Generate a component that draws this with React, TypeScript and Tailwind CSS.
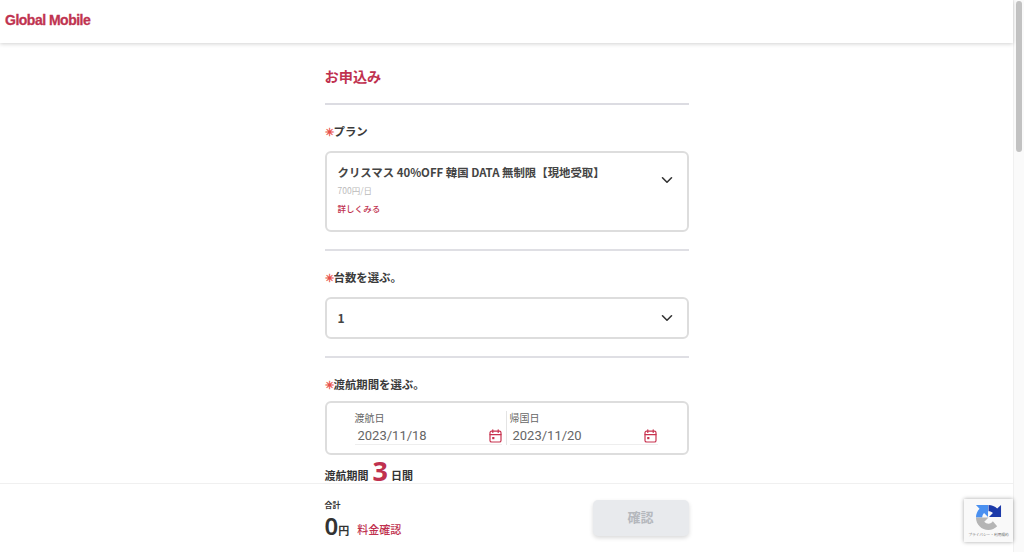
import React from "react";

const font = { fontFamily: '"Noto Sans CJK JP", "Noto Sans", sans-serif' };

function Chevron({ className = "" }: { className?: string }) {
  return (
    <svg width="14" height="14" viewBox="0 0 14 14" fill="none" stroke="#333" strokeWidth="1.6" strokeLinecap="round" strokeLinejoin="round" className={"shrink-0 " + className}>
      <path d="M2.5 4.8 7 9.2l4.5-4.4" />
    </svg>
  );
}

function Calendar() {
  return (
    <svg width="13" height="14" viewBox="0 0 13 14" fill="none" stroke="#c8324f" strokeWidth="1.2" className="shrink-0">
      <rect x="1" y="2.2" width="11" height="10.8" rx="1.6" />
      <path d="M1 5.6h11M3.8.8v2.6M9.2.8v2.6" strokeLinecap="round" />
      <rect x="3.2" y="8" width="2.2" height="2.2" fill="#c8324f" stroke="none" />
    </svg>
  );
}

function Label({ children }: { children: React.ReactNode }) {
  return (
    <div className="flex items-center h-[18px] text-[11.4px] leading-[18px] font-bold text-[#3a3a3a]">
      <span className="text-[#e8504a] text-[11px] w-[9px] font-bold">✳</span>
      {children}
    </div>
  );
}

function Recaptcha() {
  return (
    <div className="absolute right-[11px] top-[499px] w-[49px] h-[43px] bg-[#f9f9f9] shadow-[0_0_4px_rgba(0,0,0,0.35)] flex flex-col items-center pt-[5px]">
      <svg width="27" height="27" viewBox="0 0 28 28">
        <path d="M1 14C1 10.500 2.400 7.300 4.700 5L1 1H13.500V13.500L9.400 9.400C8.200 10.600 7.500 12.200 7.500 14Z" fill="#4a90f0" />
        <path d="M1 14H14L9.600 18.500C10.800 19.800 12.300 20.500 14 20.500C16 20.500 17.500 19.500 18.500 18L23 23C20.500 25.500 17.500 27 14 27C6.800 27 1 21.200 1 14Z" fill="#b5b5b5" />
        <path d="M14 1C17.500 1 20.700 2.400 23 4.700L27 1V13.500H14.500L18.600 9.400C17.400 8.200 15.800 7.500 14 7.500Z" fill="#1c3aa9" />
      </svg>
      <div className="mt-[1px] text-[3.7px] leading-[5px] text-[#666666] whitespace-nowrap">プライバシー・利用規約</div>
    </div>
  );
}

export default function App() {
  return (
    <div className="relative flex h-[552px] w-[1024px] overflow-hidden bg-white" style={font}>
      <div className="flex-1 min-w-0 flex flex-col">
        <header className="h-[43px] shrink-0 bg-white shadow-[0_1px_4px_rgba(0,0,0,0.18)] flex items-center pl-[5px] pb-[3px] text-[14px] font-bold tracking-[-0.5px] text-[#bf3350] z-10 [-webkit-text-stroke:0.3px_#bf3350]" style={{ fontFamily: '"Liberation Sans", sans-serif' }}>
          Global Mobile
        </header>
        <main className="w-[364px] mx-auto flex flex-col">
          <h1 className="mt-[23px] text-[14.2px] leading-[20px] font-bold text-[#c0314f]">お申込み</h1>
          <div className="mt-[17px] h-[2px] bg-[#dcdce2]" />
          <div className="mt-[17px]"><Label>プラン</Label></div>
          <div className="mt-[11px] h-[81px] border-2 border-[#dddddd] rounded-[6px] pl-[11px] pr-[13px] pt-[10px] flex items-start justify-between">
            <div className="flex flex-col">
              <div className="text-[11.4px] leading-[18px] font-bold text-[#444444] whitespace-nowrap">クリスマス 40%OFF 韓国 DATA 無制限【現地受取】</div>
              <div className="mt-[2px] text-[8.5px] leading-[14px] text-[#bbbbbb]">700円/日</div>
              <div className="mt-[4px] text-[8.5px] leading-[14px] font-medium text-[#c0314f]">詳しくみる</div>
            </div>
            <Chevron className="mt-[10px]" />
          </div>
          <div className="mt-[17px] h-[2px] bg-[#dfdfe4]" />
          <div className="mt-[17px]"><Label>台数を選ぶ。</Label></div>
          <div className="mt-[11px] h-[42px] border-2 border-[#dddddd] rounded-[6px] pl-[11px] pr-[13px] flex items-center justify-between">
            <span className="text-[12px] font-bold text-[#444444]">1</span>
            <Chevron />
          </div>
          <div className="mt-[17px] h-[2px] bg-[#dfdfe4]" />
          <div className="mt-[17px]"><Label>渡航期間を選ぶ。</Label></div>
          <div className="mt-[8px] h-[54px] border-2 border-[#dddddd] rounded-[6px] flex pl-[28px] pt-[8px]">
            <div className="w-[152px] flex flex-col border-r border-[#e4e4e4] h-[34px]">
              <div className="text-[10px] leading-[14px] text-[#666666]">渡航日</div>
              <div className="flex items-center justify-between border-b border-[#eeeeee] w-[147px] h-[20px] pl-[3px] pt-[2px]">
                <span className="text-[13px] text-[#666666]" style={{ fontFamily: "Roboto, sans-serif" }}>2023/11/18</span>
                <Calendar />
              </div>
            </div>
            <div className="ml-[3px] flex flex-col h-[34px]">
              <div className="text-[10px] leading-[14px] text-[#666666]">帰国日</div>
              <div className="flex items-center justify-between border-b border-[#eeeeee] w-[148px] h-[20px] pl-[3px] pt-[2px] pr-[1px]">
                <span className="text-[13px] text-[#666666]" style={{ fontFamily: "Roboto, sans-serif" }}>2023/11/20</span>
                <Calendar />
              </div>
            </div>
          </div>
          <div className="mt-[3px] flex items-end h-[26px] text-[11px] font-bold text-[#333333]">
            <span className="leading-[18px]">渡航期間</span>
            <span className="ml-[4px] mr-[3px] text-[27px] leading-[26px] text-[#c0314f]" style={{ fontFamily: '"Noto Sans", sans-serif' }}>3</span>
            <span className="leading-[18px]">日間</span>
          </div>
        </main>
      </div>

      <div className="w-[11px] shrink-0 bg-[#fafafa] border-l border-[#f0f0f0] flex justify-center pt-[1px]">
        <div className="w-[6px] h-[151px] rounded-[3px] bg-[#c2c2c2]" />
      </div>

      <footer className="absolute left-0 top-[483px] w-[1013px] h-[69px] bg-white border-t border-[#f0f0f0] flex justify-center">
        <div className="w-[364px] flex justify-between">
          <div className="flex flex-col pt-[14px]">
            <div className="text-[8px] leading-[14px] font-bold text-[#333333]">合計</div>
            <div className="mt-[2px] flex items-end h-[24px]">
              <span className="text-[24px] leading-[24px] font-semibold text-[#333333]" style={{ fontFamily: '"Noto Sans", sans-serif' }}>0</span>
              <span className="text-[11px] leading-[16px] font-bold text-[#333333]">円</span>
              <span className="ml-[8px] mb-[1px] text-[11px] leading-[16px] font-medium text-[#c0314f]">料金確認</span>
            </div>
          </div>
          <button className="mt-[16px] w-[96px] h-[36px] rounded-[5px] bg-[#e8eaed] shadow-[0_2px_4px_rgba(0,0,0,0.15)] pb-[2px] text-[13px] font-bold text-[#b5b8bd]">確認</button>
        </div>
      </footer>

      <Recaptcha />
    </div>
  );
}
